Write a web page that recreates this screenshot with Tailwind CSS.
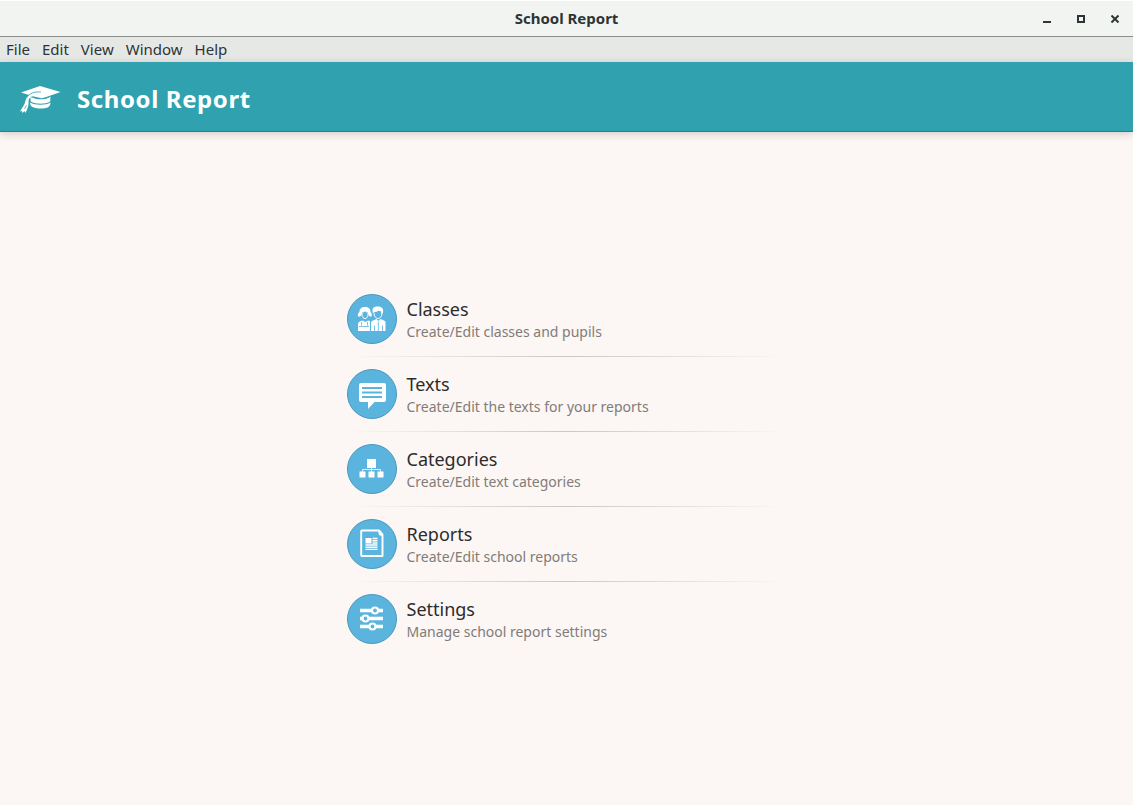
<!DOCTYPE html>
<html lang="en">
<head>
<meta charset="utf-8">
<title>School Report</title>
<script src="https://cdn.jsdelivr.net/npm/@tailwindcss/browser@4"></script>
</head>
<body class="flex min-h-screen flex-col bg-[#fcf7f4] font-['Noto_Sans',sans-serif] text-[#2e3436]">
<div class="grid h-[37px] grid-cols-[1fr_auto_1fr] items-center border-t-1 border-b border-t-white border-b-[#8b8e8b] bg-[#f2f4f1]">
  <span></span>
  <span class="text-[15px] font-bold">School Report</span>
  <div class="flex justify-end gap-2 pr-[5px]">
    <button type="button" aria-label="Minimize" class="flex h-[26px] w-[26px] items-center justify-center"><svg class="h-2 w-2" viewBox="0 0 8 8" shape-rendering="crispEdges"><path d="M0 6h8v2H0z" fill="#2e3436"/></svg></button>
    <button type="button" aria-label="Maximize" class="flex h-[26px] w-[26px] items-center justify-center"><svg class="h-2 w-2" viewBox="0 0 8 8" shape-rendering="crispEdges"><path d="M1 1h6v6H1z" fill="none" stroke="#2e3436" stroke-width="2"/></svg></button>
    <button type="button" aria-label="Close" class="flex h-[26px] w-[26px] items-center justify-center"><svg class="h-2 w-2" viewBox="0 0 8 8"><path d="M.5.5l7 7M7.500.5l-7 7" stroke="#2e3436" stroke-width="2"/></svg></button>
  </div>
</div>
<nav class="flex h-[25px] items-center gap-3 bg-[#e6e8e5] px-1.5 text-[15px]">
  <button type="button">File</button>
  <button type="button">Edit</button>
  <button type="button">View</button>
  <button type="button">Window</button>
  <button type="button">Help</button>
</nav>
<header class="flex h-[70px] items-center gap-4 border-b border-[#237f8b] bg-[#30a2af] px-5 pt-1 text-white shadow-[0_2px_8px_rgba(60,30,30,0.2)]">
  <svg class="h-[30px] w-[41px]" viewBox="0 0 41 30" fill="#fff">
    <path d="M1 8.500 20 2l20.500 6L22 14.500 13 12.300l-4 2.500c-1 3 .2 6-1.500 9.500L5.500 29l-1-2-2 2-.5-2-2 .500 4-6.500c1.300-2 1.200-5 3-8L9 11z"/>
    <path d="M7 13.500c2-4 7-6 14-5.500" fill="none" stroke="#30a2af" stroke-width=".8"/>
    <path d="M10.500 12.500c5 3.500 15 4 20 0l-.3 5c-5 3-14.500 3-19.500 0z"/>
    <path d="M10.500 12.800q11.500 3.500 20-.3" fill="none" stroke="#30a2af" stroke-width=".6"/>
    <path d="M10 18.500c5 3 16 3 20.500 0 0 2.500-1 4-3 5-4 1.500-10 1.500-14.500-.2-2-1-3-2.500-3-4.800z"/>
    <path d="M4.500 25l2-4" stroke="#30a2af" stroke-width=".7"/>
  </svg>
  <h1 class="text-2xl font-bold tracking-wide">School Report</h1>
</header>
<main class="flex flex-1 items-center justify-center">
  <ul class="w-full max-w-[440px] pt-px text-[#2c2c2c]">
    <li>
      <a href="#classes" class="flex h-[74px] items-center gap-[10px]">
        <svg class="h-[50px] w-[50px] shrink-0" viewBox="0 0 50 50" fill="#fff"><circle cx="25" cy="25" r="24.500" fill="#5bb4de" stroke="#4b98bd"/>
          <path d="M11 37v-6.500q0-3 3-3.500l2-.500q2.500 2.500 5 0l2 .500v10z"/>
          <path d="M12.500 18c0-3.500 2-5 5.500-5s5.500 1.500 5.500 5c1.500 1 1.500 3 1 4.500-1.500 0-2.500-.5-3-1.500l-.5-2.500c-1.500 0-2.500-.5-3-1.500-.5 1-1.500 1.500-3 1.500L14.500 21c-.5 1-1.500 1.500-3.500 1.500-.5-2 0-3.500 1.500-4.500z"/>
          <path d="M15 19v2c.5 2.500 1.500 3.500 3 3.500s2.500-1 3-3.500v-2" fill="none" stroke="#fff"/>
          <path d="M12 32.500h10M14.500 28v3.500M20.500 28v3.500" fill="none" stroke="#5bb4de" stroke-width=".8"/>
          <path d="M24 37v-8.500c0-1 1-1.500 2-2l3.500-1.500 2 2 2-2 3.500 1.500c1 .5 1.500 1 1.500 2V37z"/>
          <path d="M26 19c-1.500-4.500.5-6.500 4.500-6.500s6.500 1.500 5.500 6.500l-1.500 1-.5-3c-1.500.5-2 0-2.500-.5-1 1-2.500 1.500-4 1.500z"/>
          <path d="M27 18.500c0 4 2 6 4 6s4-2 4-6" fill="none" stroke="#fff"/>
          <path d="M31.300 27.500V37M27.500 31.500V37M35.500 31.500V37" fill="none" stroke="#5bb4de" stroke-width=".8"/></svg>
        <span class="flex flex-col pt-0.5"><span class="text-lg leading-6">Classes</span><span class="text-sm leading-[22px] text-[#817c79]">Create/Edit classes and pupils</span></span>
      </a>
      <div class="h-px bg-linear-to-r from-transparent via-[#ccc7c4] to-transparent"></div>
    </li>
    <li>
      <a href="#texts" class="flex h-[74px] items-center gap-[10px]">
        <svg class="h-[50px] w-[50px] shrink-0" viewBox="0 0 50 50" fill="#fff"><circle cx="25" cy="25" r="24.500" fill="#5bb4de" stroke="#4b98bd"/>
          <path d="M14 14h23q2 0 2 2v15q0 2-2 2h-9.500L21 40v-7h-7q-2 0-2-2V16q0-2 2-2z"/><path d="M15 19h20M15 23.500h20M15 28h20" stroke="#5bb4de" stroke-width="2"/></svg>
        <span class="flex flex-col pt-0.5"><span class="text-lg leading-6">Texts</span><span class="text-sm leading-[22px] text-[#817c79]">Create/Edit the texts for your reports</span></span>
      </a>
      <div class="h-px bg-linear-to-r from-transparent via-[#ccc7c4] to-transparent"></div>
    </li>
    <li>
      <a href="#categories" class="flex h-[74px] items-center gap-[10px]">
        <svg class="h-[50px] w-[50px] shrink-0" viewBox="0 0 50 50" fill="#fff"><circle cx="25" cy="25" r="24.500" fill="#5bb4de" stroke="#4b98bd"/>
          <path d="M20 15h9v9h-9zM12.500 27.500h6v6h-6zM21.500 27.500h6v6h-6zM30.500 27.500h6v6h-6z"/><path d="M24.500 24v4M15.500 28v-2.500h18V28" fill="none" stroke="#fff" stroke-width=".8"/></svg>
        <span class="flex flex-col pt-0.5"><span class="text-lg leading-6">Categories</span><span class="text-sm leading-[22px] text-[#817c79]">Create/Edit text categories</span></span>
      </a>
      <div class="h-px bg-linear-to-r from-transparent via-[#ccc7c4] to-transparent"></div>
    </li>
    <li>
      <a href="#reports" class="flex h-[74px] items-center gap-[10px]">
        <svg class="h-[50px] w-[50px] shrink-0" viewBox="0 0 50 50" fill="#fff"><circle cx="25" cy="25" r="24.500" fill="#5bb4de" stroke="#4b98bd"/>
          <path d="M15 11.500h17l3.500 4V37H15q-.8 0-.8-.8V12.300q0-.8.8-.8z" fill="none" stroke="#fff" stroke-width="1.900" stroke-linejoin="round"/><path d="M31 11.500h1.500l3.500 4v2l-4-1.500z"/><path d="M18.500 19h6v5.500h-6z"/><path d="M25.500 19.500h5M25.500 21.800h5M25.500 24h5M18.500 26h12M18.500 28.200h12M18.500 30.400h12" stroke="#fff" stroke-width="1.400"/></svg>
        <span class="flex flex-col pt-0.5"><span class="text-lg leading-6">Reports</span><span class="text-sm leading-[22px] text-[#817c79]">Create/Edit school reports</span></span>
      </a>
      <div class="h-px bg-linear-to-r from-transparent via-[#ccc7c4] to-transparent"></div>
    </li>
    <li>
      <a href="#settings" class="flex h-[74px] items-center gap-[10px]">
        <svg class="h-[50px] w-[50px] shrink-0" viewBox="0 0 50 50" fill="#fff"><circle cx="25" cy="25" r="24.500" fill="#5bb4de" stroke="#4b98bd"/>
          <path d="M13 16.500h23M13 24.500h23M13 32.500h23" stroke="#fff" stroke-width="3.600"/><g fill="#5bb4de" stroke="#fff" stroke-width="2.200"><circle cx="28" cy="16.500" r="3"/><circle cx="18.500" cy="24.500" r="3"/><circle cx="25.500" cy="32.500" r="3"/></g></svg>
        <span class="flex flex-col pt-0.5"><span class="text-lg leading-6">Settings</span><span class="text-sm leading-[22px] text-[#817c79]">Manage school report settings</span></span>
      </a>
    </li>
  </ul>
</main>
</body>
</html>
